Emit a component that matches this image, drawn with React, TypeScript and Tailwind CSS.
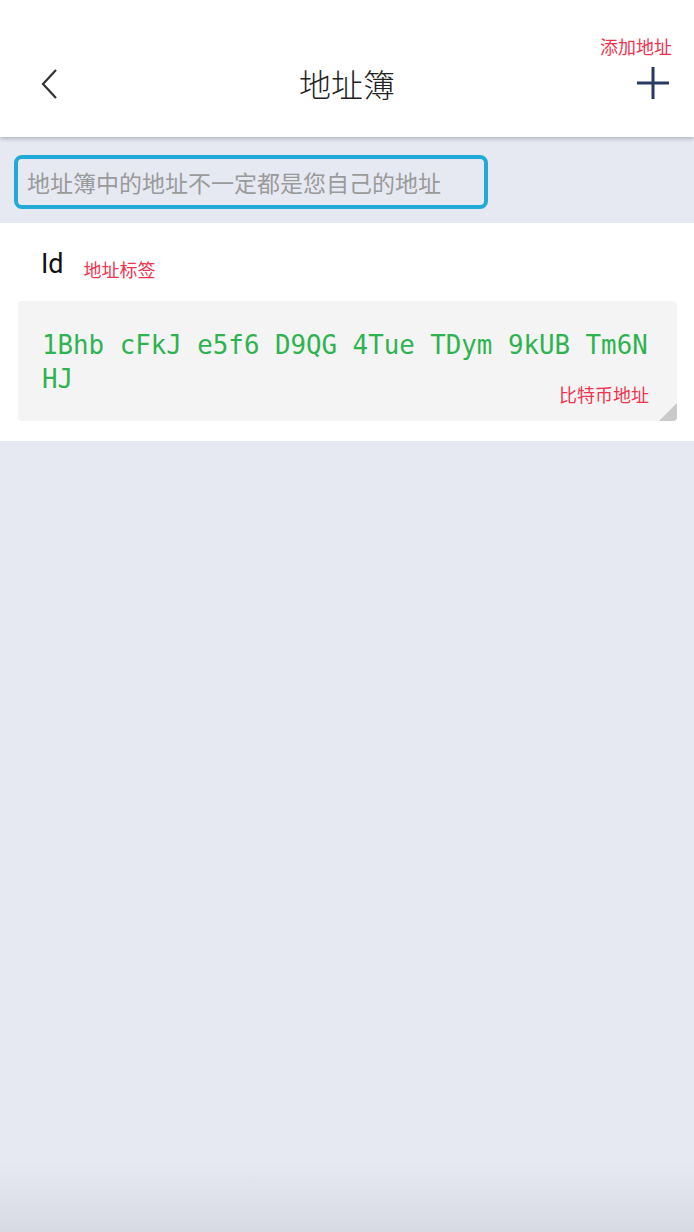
import React from "react";

export default function App() {
  const cjk = { fontFamily: '"Noto Sans CJK SC", "Noto Sans", sans-serif' } as React.CSSProperties;
  return (
    <div className="w-[694px] h-[1232px] bg-[#e6e9f2] flex flex-col relative overflow-hidden" style={cjk}>
      <header className="h-[137px] bg-white relative shadow-[0_2px_4px_rgba(0,0,0,0.22)] z-10 shrink-0">
        <svg className="absolute left-[38px] top-[67px]" width="24" height="34" viewBox="0 0 24 34">
          <path d="M18 3 L5 17 L18 31" fill="none" stroke="#333" strokeWidth="2.2" />
        </svg>
        <div className="absolute left-0 right-0 top-[61px] text-center text-[32px] leading-[44px] text-[#222] font-light">地址簿</div>
        <div className="absolute right-[22px] top-[34px] text-[18px] leading-[24px] text-[#f0344f]">添加地址</div>
        <svg className="absolute left-[637px] top-[67px]" width="32" height="32" viewBox="0 0 32 32">
          <path d="M16 0 V32 M0 16 H32" stroke="#263a63" strokeWidth="3" />
        </svg>
      </header>
      <div className="px-[14px] pt-[18px] pb-[14px]">
        <div className="w-[474px] h-[54px] border-[4px] border-[#22aad6] rounded-[8px] flex items-center pl-[9px]">
          <span className="text-[23px] text-[#9a9a9a] leading-none">地址簿中的地址不一定都是您自己的地址</span>
        </div>
      </div>
      <div className="bg-white pt-[22px] pb-[20px]">
        <div className="flex items-end pl-[41px] h-[38px] mb-[18px]">
          <span className="text-[27px] leading-[38px] text-[#111]" style={{ fontFamily: 'Roboto, "Noto Sans", sans-serif' }}>Id</span>
          <span className="text-[18px] leading-[24px] text-[#f0344f] ml-[20px] mb-[2px]">地址标签</span>
        </div>
        <div className="ml-[18px] mr-[17px] bg-[#f4f4f4] rounded-[4px] relative h-[120px] pt-[27px] pl-[24px] pr-[20px] overflow-hidden">
          <div className="flex flex-col text-[25.8px] leading-[34px] text-[#2eb350]" style={{ fontFamily: '"DejaVu Sans Mono", monospace' }}>
            <span className="whitespace-pre">1Bhb cFkJ e5f6 D9QG 4Tue TDym 9kUB Tm6N</span>
            <span className="self-start">HJ</span>
          </div>
          <div className="absolute right-[28px] bottom-[15px] text-[18px] leading-[24px] text-[#f0344f]">比特币地址</div>
          <div className="absolute right-0 bottom-0 w-0 h-0 border-l-[18px] border-l-transparent border-b-[18px] border-b-[#c9c9c9]" />
        </div>
      </div>
      <div className="flex-1" />
      <div className="absolute left-0 right-0 bottom-0 h-[70px] bg-gradient-to-b from-[#e6e9f2] to-[#d7dae2]" />
    </div>
  );
}
